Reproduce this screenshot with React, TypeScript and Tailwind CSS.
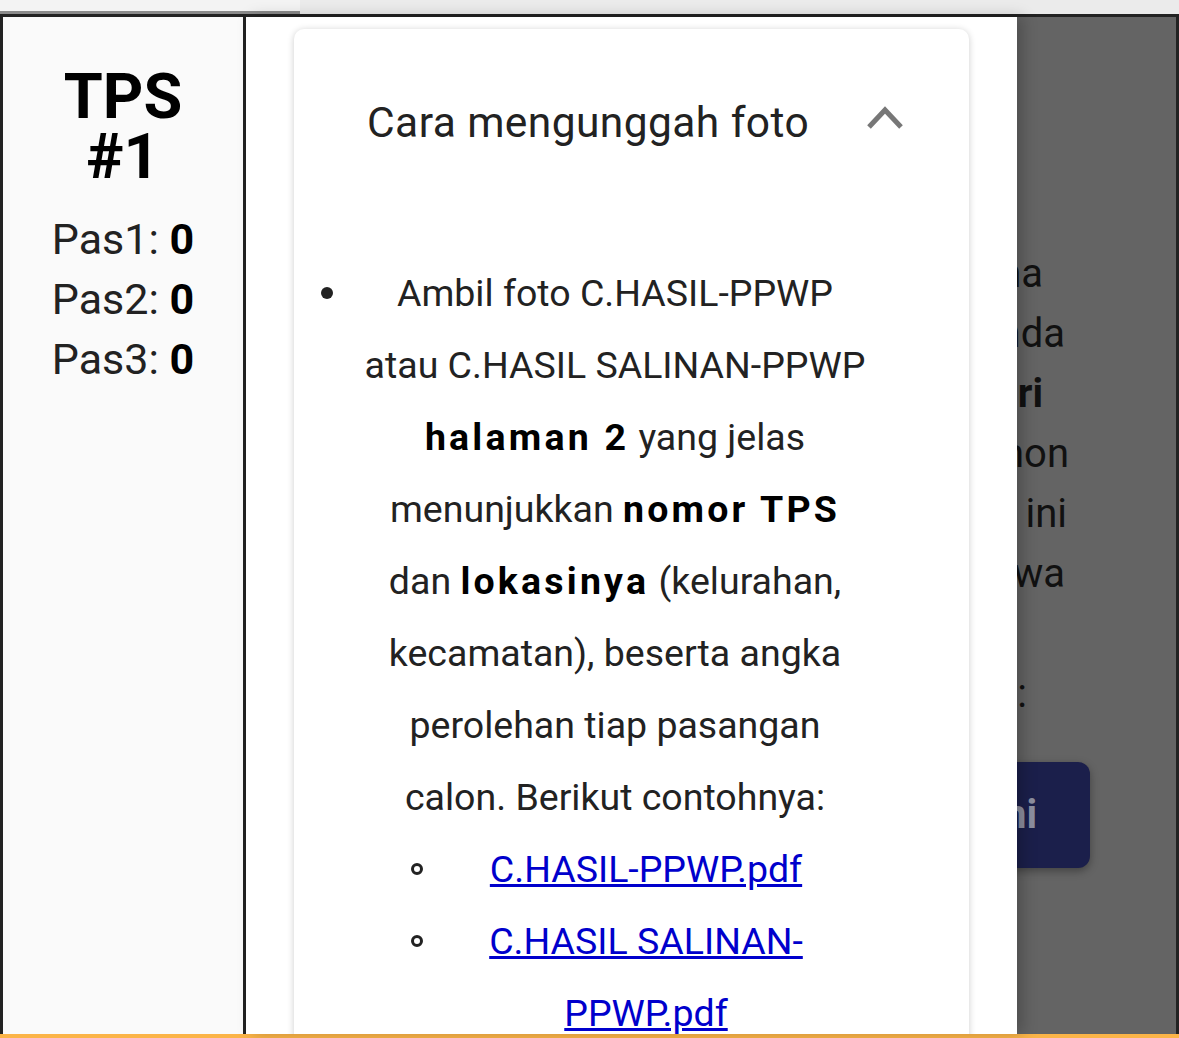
import React from "react";

function ChevronUp() {
  return (
    <svg width="40" height="26" viewBox="0 0 40 26" fill="none">
      <polyline
        points="4,22 20,5 36,22"
        stroke="#777777"
        strokeWidth="5"
        strokeLinecap="butt"
        strokeLinejoin="miter"
      />
    </svg>
  );
}

const ghostLines = [
  { w: "w-[26px]", text: "sebagaimana", bold: false },
  { w: "w-[48px]", text: "Anda", bold: false },
  { w: "w-[26px]", text: "sendiri", bold: true },
  { w: "w-[52px]", text: "kanon", bold: false },
  { w: "w-[50px]", text: "foto ini", bold: false },
  { w: "w-[48px]", text: "bahwa", bold: false },
  { w: "w-[0px]", text: "", bold: false },
  { w: "w-[10px]", text: "berikut:", bold: false },
];

export default function App() {
  return (
    <div className="w-[1179px] h-[1038px] overflow-hidden flex flex-col bg-white font-['Roboto',sans-serif] text-[#222]">
      {/* top strip with progress */}
      <div className="h-[14px] flex bg-[#ebebeb]">
        <div className="w-[300px] flex flex-col bg-[#f3f3f3]">
          <div className="flex-1" />
          <div className="h-[3px] bg-[#8a8a8a]" />
        </div>
      </div>

      <div className="flex-1 min-h-0 flex border-t-[3px] border-x-[3px] border-[#222]">
        {/* left side */}
        <aside className="w-[243px] shrink-0 bg-[#fafafa] border-r-[3px] border-[#222] flex flex-col items-center pt-[50px]">
          <h1 className="text-[63px] leading-[60px] font-bold text-black text-center">
            TPS
            <br />
            #1
          </h1>
          <div className="mt-[22px] flex flex-col text-[43px] leading-[60px] text-[#222]">
            <div>
              Pas1: <b className="text-black">0</b>
            </div>
            <div>
              Pas2: <b className="text-black">0</b>
            </div>
            <div>
              Pas3: <b className="text-black">0</b>
            </div>
          </div>
        </aside>

        {/* drawer */}
        <section className="w-[771px] shrink-0 bg-white pt-[12px] px-[48px] overflow-hidden relative z-10 shadow-[6px_0_14px_rgba(0,0,0,0.22)]">
          <div className="rounded-[10px] bg-white shadow-[0_1px_7px_rgba(0,0,0,0.2)] h-[1100px]">
            <div className="flex justify-between pl-[73px] pr-[64px] pt-[69px]">
              <span className="text-[42.5px] leading-[50px] text-[#222] tracking-[0.01em]">
                Cara mengunggah foto
              </span>
              <span className="mt-[7px]">
                <ChevronUp />
              </span>
            </div>

            <ul className="pt-[109px] pl-[22px] pr-[82px] text-[37.5px] leading-[72px]">
              <li className="flex">
                <span className="w-[22px] h-[72px] shrink-0 flex items-center justify-center">
                  <span className="w-[12px] h-[12px] rounded-full bg-[#222]" />
                </span>
                <div className="flex-1 ml-[5px] text-center">
                  Ambil foto C.HASIL-PPWP
                  <br />
                  atau C.HASIL SALINAN-PPWP
                  <br />
                  <b className="text-black tracking-[0.085em]">halaman 2</b> yang jelas
                  <br />
                  menunjukkan <b className="text-black tracking-[0.085em]">nomor TPS</b>
                  <br />
                  dan <b className="text-black tracking-[0.085em]">lokasinya</b> (kelurahan,
                  <br />
                  kecamatan), beserta angka
                  <br />
                  perolehan tiap pasangan
                  <br />
                  calon. Berikut contohnya:
                  <ul className="pl-[63px] pr-[23px]">
                    <li className="flex">
                      <span className="w-[22px] h-[72px] shrink-0 flex items-center justify-center">
                        <span className="w-[12px] h-[12px] rounded-full border-[3px] border-[#222]" />
                      </span>
                      <div className="flex-1 text-center">
                        <a href="#" className="text-[#0000cc] underline">
                          C.HASIL-PPWP.pdf
                        </a>
                      </div>
                    </li>
                    <li className="flex">
                      <span className="w-[22px] h-[72px] shrink-0 flex items-center justify-center">
                        <span className="w-[12px] h-[12px] rounded-full border-[3px] border-[#222]" />
                      </span>
                      <div className="flex-1 text-center">
                        <a href="#" className="text-[#0000cc] underline">
                          C.HASIL SALINAN-
                          <br />
                          PPWP.pdf
                        </a>
                      </div>
                    </li>
                  </ul>
                </div>
              </li>
            </ul>
          </div>
        </section>

        {/* dimmed page behind */}
        <div className="flex-1 min-w-0 bg-[#646464] overflow-hidden flex flex-col pt-[227px] text-[40px] leading-[60px] text-[#111]">
          {ghostLines.map((l, i) => (
            <div key={i} className={`${l.w} h-[60px] flex justify-end`}>
              <span className={`whitespace-nowrap ${l.bold ? "font-bold" : ""}`}>{l.text}</span>
            </div>
          ))}
          <div className="mt-[38px] w-[73px] h-[106px] flex justify-end">
            <div className="shrink-0 w-[220px] h-[106px] rounded-[12px] bg-[#1b1f4b] shadow-[0_3px_8px_rgba(0,0,0,0.35)] flex items-center justify-end pr-[53px]">
              <span className="whitespace-nowrap font-bold text-[40px] text-[#8d8fa0]">Unggah ini</span>
            </div>
          </div>
        </div>
      </div>

      <div className="h-[4px] bg-[#fbb448]" />
    </div>
  );
}
